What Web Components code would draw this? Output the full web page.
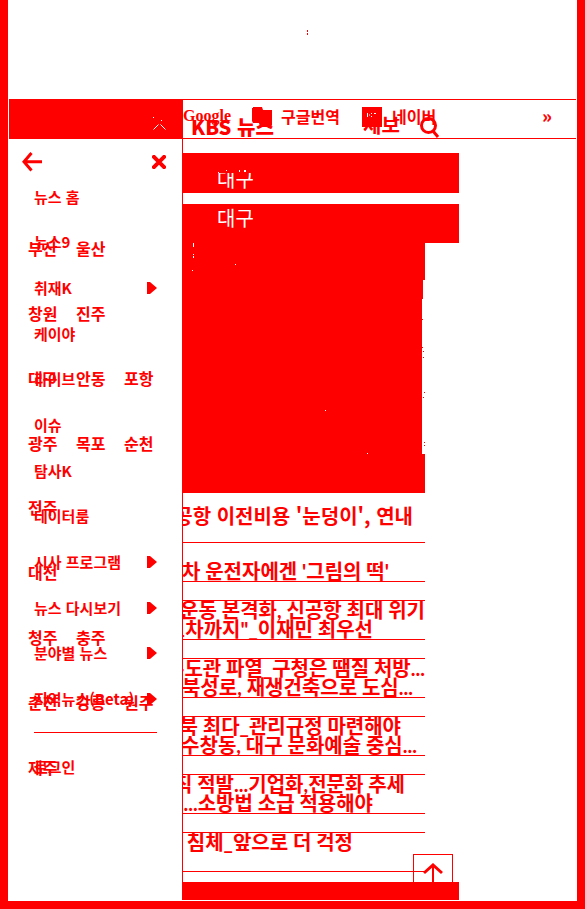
<!DOCTYPE html>
<html lang="ko">
<head>
<meta charset="utf-8">
<title>KBS 뉴스 대구</title>
<style>
  :root { --ink: #f00; --paper: #fff; }
  body { margin: 0; background: var(--paper); color: var(--ink); font-family: "Noto Sans CJK KR", sans-serif; font-weight: 700; }
</style>
</head>
<body>
<news-app></news-app>
<script>
const define = (name, html, setup) => customElements.define(name, class extends HTMLElement {
  constructor() {
    super();
    const t = document.createElement('template');
    t.innerHTML = '<style>*{box-sizing:border-box}a{color:inherit;text-decoration:none}button{border:0;padding:0;background:none;color:inherit;font:inherit;display:block}svg{display:block}ul{list-style:none;margin:0;padding:0}</style>' + html;
    this.attachShadow({ mode: 'open' }).append(t.content.cloneNode(true));
  }
  connectedCallback() { if (setup) setup(this, this.shadowRoot); }
});

define('translate-bar', `
<style>
  :host { display: grid; border: solid var(--ink); border-width: 1px 0; height: 40px; overflow: hidden; white-space: nowrap; }
  .layer { grid-area: 1 / 1; display: flex; min-width: 0; font-size: 16px; line-height: 18px; }
  .langs { align-items: flex-start; padding-top: 7px; }
  .google { width: 69px; font-family: "Liberation Serif", serif; line-height: 18px; }
  .gt { width: 110px; display: flex; gap: 9px; }
  .nv { display: flex; gap: 10px; flex: 1; min-width: 0; }
  .name { width: 44px; overflow: hidden; }
  .more { margin-right: 24px; font-size: 18px; font-weight: 900; line-height: 16px; }
  .brand { font-size: 20px; line-height: 20px; padding: 17px 0 0 8px; align-items: flex-start; }
  .brand .logo { width: 172px; font-weight: 900; }
  .brand .tip { width: 57px; line-height: 16px; }
</style>
<div class="layer langs">
  <a class="google" href="#">Google</a>
  <a class="gt" href="#"><svg width="20" height="20" viewBox="0 0 20 20"><path fill="currentColor" d="M0 1h1V0h9l1 3h9v15l-1 2H8l-1-4H1l-1-2z"/></svg><span>구글번역</span></a>
  <a class="nv" href="#"><svg width="20" height="20" viewBox="0 0 20 20"><path fill="currentColor" d="M0 0h20v20H0z"/><path stroke="#fff" d="M5.500 6v4M7 8h1M9.500 6v1M9.500 9v1M12 6.500h2"/></svg><span class="name">네이버</span></a>
  <button class="more" aria-label="더보기">»</button>
</div>
<div class="layer brand">
  <a class="logo" href="#">KBS 뉴스</a><a class="tip" href="#">제보</a>
  <button aria-label="검색"><svg width="20" height="21" viewBox="0 0 20 21"><g fill="none" stroke="currentColor" stroke-width="3"><circle cx="8.500" cy="8.500" r="7"/><path d="M13 14l5 6"/></g></svg></button>
</div>`);

define('menu-item', `
<style>
  :host { display: flex; align-items: center; justify-content: space-between; white-space: nowrap; }
  svg { display: none; flex: none; }
  :host([more]) svg { display: block; }
  a { width: 0; flex: 1; }
</style>
<a href="#"><slot></slot></a><svg width="10" height="12" viewBox="0 0 10 12"><path fill="currentColor" d="M0 0h3l7 6-7 6H0z"/></svg>`);

define('region-row', `
<style>
  :host { display: grid; grid-template-columns: repeat(3, 48px); align-items: center; font-size: 16px; line-height: 20px; white-space: nowrap; }
</style>`, (el, root) => {
  for (const name of el.getAttribute('names').split(' ')) {
    const a = document.createElement('a');
    a.href = '#';
    a.textContent = name;
    root.append(a);
  }
});

define('side-drawer', `
<style>
  :host { display: flex; flex-direction: column; border-right: 1px solid var(--ink); background: var(--paper); }
  .bar { height: 40px; background: var(--ink); display: flex; justify-content: flex-end; align-items: flex-end; padding: 0 16px 9px 0; }
  .tools { display: flex; justify-content: space-between; align-items: center; height: 35px; padding: 10px 16px 0 13px; }
  .stack { display: grid; }
  .menu, .regions { grid-area: 1 / 1; display: grid; align-self: start; }
  .menu { grid-template-rows: repeat(12, 1fr); min-height: 548px; margin: 0 25px; font-size: 15px; line-height: 20px; }
  .regions { grid-template-rows: repeat(9, 1fr); min-height: 583px; margin: 42px 0 0 19px; }
  .login { grid-area: 1 / 1; align-self: start; margin: 558px 25px 0; border-top: 1px solid var(--ink); padding-top: 24px; font-size: 15px; line-height: 20px; }
</style>
<div class="bar"><svg width="13" height="13" viewBox="0 0 13 13"><path stroke="#fff" d="M0 .5h1M8 3.500h1M.5 12.500l5-5M7.500 7.500l5 5"/></svg></div>
<div class="tools">
  <button aria-label="뒤로"><svg width="20" height="20" viewBox="0 0 20 20"><path fill="none" stroke="currentColor" stroke-width="3" d="M9.500 1L2 9.800l7.500 8.700M2 9.800h18"/></svg></button>
  <button aria-label="닫기"><svg width="14" height="14" viewBox="0 0 14 14"><path stroke="currentColor" stroke-width="4" d="M.5 .5l13 13M13.500 .5l-13 13"/></svg></button>
</div>
<div class="stack">
  <nav class="menu">
    <menu-item>뉴스 홈</menu-item><menu-item>뉴스9</menu-item><menu-item more>취재K</menu-item><menu-item>케이야</menu-item>
    <menu-item>라이브</menu-item><menu-item>이슈</menu-item><menu-item>탐사K</menu-item><menu-item>데이터룸</menu-item>
    <menu-item more>시사 프로그램</menu-item><menu-item more>뉴스 다시보기</menu-item><menu-item more>분야별 뉴스</menu-item><menu-item more>지역뉴스(Beta)</menu-item>
  </nav>
  <div class="login"><a href="#">로그인</a></div>
  <nav class="regions">
    <region-row names="부산 울산"></region-row><region-row names="창원 진주"></region-row><region-row names="대구 안동 포항"></region-row>
    <region-row names="광주 목포 순천"></region-row><region-row names="전주"></region-row><region-row names="대전"></region-row>
    <region-row names="청주 충주"></region-row><region-row names="춘천 강릉 원주"></region-row><region-row names="제주"></region-row>
  </nav>
</div>`);

define('region-title', `
<style>
  :host { display: block; background: var(--ink); color: var(--paper); font-size: 20px; font-weight: 400; line-height: 28px; padding: 0 34px; height: 39px; }
  :host([cut]) { height: 40px; padding-top: 17px; }
  h2 { font: inherit; margin: 0; }
  svg { display: none; }
  :host([cut]) svg { display: block; }
  :host([cut]) h2 { height: 20px; overflow: hidden; display: flex; align-items: flex-end; }
</style>
<svg width="36" height="3" viewBox="0 0 36 3"><path fill="currentColor" d="M1 2h1v1H1zM9 0h1v1H9zM22 0h1v2h-1zM27 0h2v2h-2z"/></svg>
<h2><slot></slot></h2>`);

define('headline-line', `
<style>
  :host { display: flex; justify-content: flex-end; min-width: 0; white-space: nowrap; font-family: Lato, "Noto Sans CJK KR", sans-serif; font-size: 20px; line-height: 19px; height: 19px; }
  a { flex: none; }
</style><a href="#"><slot></slot></a>`, el => { el.style.paddingRight = (el.getAttribute('inset') || 0) + 'px'; });

define('headline-box', `
<style>
  :host { display: grid; grid-template: 19px 19px / minmax(0, 1fr); border: solid var(--ink); border-width: 1px 0; overflow: hidden; }
</style><slot></slot>`);

define('region-page', `
<style>
  :host { display: grid; grid-template-columns: minmax(0, 242fr) minmax(0, 34fr) minmax(0, 117fr); grid-auto-rows: max-content; padding-top: 14px; }
  region-title { grid-column: 1 / 3; }
  region-title + region-title { margin-top: 11px; }
  .photo { width: 100%; height: 250px; grid-column: 1; }
  .lead { grid-column: 1; display: flex; justify-content: flex-end; overflow: hidden; white-space: nowrap; font-size: 20px; line-height: 28px; padding: 9px 12px 12px 0; }
  .lead span { flex: none; }
  .list { grid-column: 1; display: grid; grid-template-columns: minmax(0, 1fr); gap: 18px; }
  .foot { grid-column: 1 / 3; position: relative; margin-top: 10px; height: 18px; background: var(--ink); }
  .top { position: absolute; right: 6px; bottom: 18px; width: 40px; height: 28px; border: 1px solid var(--ink); border-bottom: 0; padding: 8px 9px 0; }
</style>
<region-title cut>대구</region-title>
<region-title>대구</region-title>
<svg class="photo" viewBox="0 0 242 250" preserveAspectRatio="none" role="img" aria-label="뉴스 사진"><path fill="currentColor" d="M0 0h242v37h-2v19h-1v155h3v39H0z"/><path fill="currentColor" d="M239 76h1v1h-1zM239 104h1v1h-1zM240 108h1v1h-1zM240 114h1v1h-1zM241 149h1v1h-1zM240 154h1v1h-1zM241 199h1v1h-1zM241 202h1v1h-1z"/><path fill="#fff" d="M10 0h1v4h-1zM10 11h1v1h-1zM10 13h1v2h-1zM9 27h1v1H9zM52 21h1v1h-1zM142 167h1v1h-1zM184 210h1v1h-1z"/></svg>
<a class="lead" href="#"><span>공항 이전비용 '눈덩이', 연내</span></a>
<div class="list">
  <headline-box><span></span><headline-line inset="36">차 운전자에겐 '그림의 떡'</headline-line></headline-box>
  <headline-box><headline-line>운동 본격화, 신공항 최대 위기</headline-line><headline-line inset="52">1차까지"_이재민 최우선</headline-line></headline-box>
  <headline-box><headline-line>수도관 파열_구청은 땜질 처방...</headline-line><headline-line inset="12">)북성로, 재생건축으로 도심...</headline-line></headline-box>
  <headline-box><headline-line inset="24">북 최다_관리규정 마련해야</headline-line><headline-line inset="8">)수창동, 대구 문화예술 중심...</headline-line></headline-box>
  <headline-box><headline-line inset="20">직 적발...기업화,전문화 추세</headline-line><headline-line inset="52">...소방법 소급 적용해야</headline-line></headline-box>
  <headline-box><headline-line inset="72">침체_앞으로 더 걱정</headline-line></headline-box>
</div>
<div class="foot"><button class="top" aria-label="맨 위로"><svg width="20" height="20" viewBox="0 0 20 20"><path fill="none" stroke="currentColor" stroke-width="3" d="M1 10l9-8 9 8"/><path stroke="currentColor" stroke-width="2" d="M10 2v18"/></svg></button></div>`);

define('news-app', `
<style>
  :host { display: grid; grid-template: 99px 40px 1fr / 174px minmax(0, 1fr); min-height: 100vh; border: 8px solid var(--ink); border-top: 0; padding: 0 1px 1px; box-sizing: border-box; }
  header { grid-column: 1 / 3; display: flex; justify-content: center; padding-top: 30px; }
  header svg { margin-left: 30px; }
  side-drawer { grid-area: 2 / 1 / 4 / 2; }
</style>
<header><svg width="1" height="5" viewBox="0 0 1 5"><path fill="currentColor" d="M0 0h1v2H0zM0 3h1v2H0z"/></svg></header>
<side-drawer></side-drawer>
<translate-bar></translate-bar>
<region-page></region-page>`);
</script>
</body>
</html>
